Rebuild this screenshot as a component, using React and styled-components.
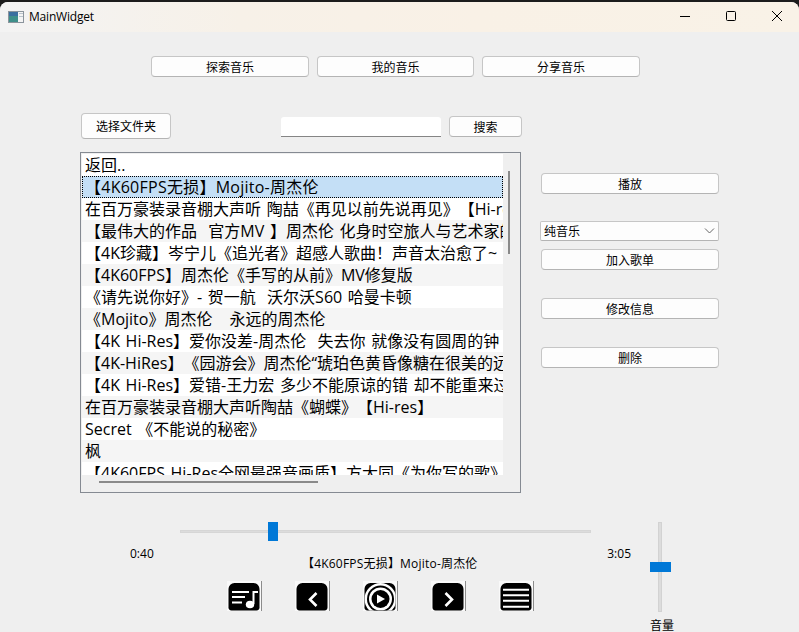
import React from "react";
import styled, { createGlobalStyle } from "styled-components";

const Global = createGlobalStyle`
  html, body { margin: 0; padding: 0; background: #efefef; }
  body { font-family: "Open Sans", "Noto Sans CJK SC", sans-serif; font-size: 12px; color: #000; text-spacing-trim: space-all; }
`;

const FONT = `"Open Sans", "Noto Sans CJK SC", sans-serif`;

const Window = styled.div`
  width: 799px;
  height: 632px;
  overflow: hidden;
  display: flex;
  flex-direction: column;
  background: #1c1c1c;
`;
const Frame = styled.div`
  flex: 1;
  margin-top: 2px;
  border-radius: 8px 8px 0 0;
  overflow: hidden;
  background: #efefef;
  display: flex;
  flex-direction: column;
`;
const TitleBar = styled.header`
  height: 30px;
  flex: none;
  display: flex;
  align-items: center;
  padding-left: 8px;
  margin-right: -1px;
  background: linear-gradient(90deg, #f3f3f3 0%, #f7f1e8 30%, #f9f1e6 60%, #f9f2e7 100%);
`;
const AppIcon = styled.svg`
  width: 16px;
  height: 12px;
  margin-right: 5px;
  margin-top: 0;
`;
const TitleText = styled.span`
  font-size: 12px;
  letter-spacing: -0.2px;
  margin-top: -1px;
  flex: 1;
`;
const WinBtn = styled.button`
  width: 46px;
  height: 30px;
  margin-top: -2px;
  padding: 0;
  border: 0;
  background: transparent;
  display: flex;
  align-items: center;
  justify-content: center;
`;
const Button = styled.button`
  box-sizing: border-box;
  width: ${(p) => p.$w || 178}px;
  height: ${(p) => p.$h || 21}px;
  padding: 0;
  flex: none;
  border: 1px solid #c6c6c6;
  border-bottom-color: #b4b4b4;
  border-radius: 4px;
  background: #fdfdfd;
  font: 12px ${FONT};
  color: #000;
  margin-top: ${(p) => p.$mt || 0}px;
`;
const NavRow = styled.nav`
  display: flex;
  gap: 8px;
  padding: 24px 0 0 151px;
`;
const Toolbar = styled.div`
  display: flex;
  align-items: flex-start;
  padding: 36px 0 0 81px;
`;
const SearchInput = styled.input`
  box-sizing: border-box;
  width: 160px;
  height: 20px;
  margin: 4px 8px 0 110px;
  padding: 0 4px;
  border: 0;
  border-bottom: 1px solid #858585;
  border-radius: 3px 3px 0 0;
  background: #fff;
  outline: none;
`;
const Middle = styled.div`
  display: flex;
  padding: 13px 0 0 80px;
  gap: 19px;
`;
const ListBox = styled.div`
  box-sizing: border-box;
  width: 441px;
  height: 341px;
  flex: none;
  border: 1px solid #858a92;
  background: #efefef;
  display: grid;
  grid-template-columns: 421px 18px;
  grid-template-rows: 321px 18px;
`;
const Rows = styled.ul`
  margin: 1px 0 0 1px;
  padding: 0;
  list-style: none;
  overflow: hidden;
  height: 321px;
  width: 421px;
`;
const Row = styled.li`
  box-sizing: border-box;
  height: 22px;
  padding: 0 0 0 ${(p) => (p.$selected ? 2 : 3)}px;
  font: 16px/23px ${FONT};
  word-spacing: 1.5px;
  letter-spacing: ${(p) => (p.$selected ? "0.25px" : "0")};
  white-space: pre;
  overflow: hidden;
  background: ${(p) => (p.$selected ? "#c4dff6" : p.$alt ? "#f5f5f5" : "#fff")};
  border: ${(p) => (p.$selected ? "1px dotted #000" : "0")};
  line-height: ${(p) => (p.$selected ? "21px" : "23px")};
`;
const VTrack = styled.div`
  position: relative;
  margin: 1px 0 0 0;
`;
const VThumb = styled.div`
  position: absolute;
  left: 6px;
  top: 17px;
  width: 2px;
  height: 83px;
  background: #8a8a8a;
`;
const HTrack = styled.div`
  position: relative;
  grid-column: 1 / 3;
`;
const HThumb = styled.div`
  position: absolute;
  left: 18px;
  top: 7px;
  width: 219px;
  height: 2px;
  background: #8a8a8a;
`;
const Side = styled.aside`
  display: flex;
  flex-direction: column;
  width: 179px;
  padding-top: 21px;
  align-items: flex-end;
`;
const SelectBox = styled.div`
  box-sizing: border-box;
  width: 179px;
  height: 20px;
  margin-top: 27px;
  border: 1px solid #c6c6c6;
  border-bottom-color: #b4b4b4;
  border-radius: 2px;
  background: #fdfdfd;
  display: flex;
  align-items: center;
  justify-content: space-between;
  padding: 0 2px 0 3px;
  font-size: 12px;
`;
const Player = styled.section`
  display: flex;
  align-items: flex-start;
  padding: 29px 0 0 0;
`;
const Transport = styled.div`
  width: 650px;
  flex: none;
  display: flex;
  flex-direction: column;
`;
const SeekWrap = styled.div`
  position: relative;
  margin-left: 180px;
  width: 411px;
  height: 20px;
`;
const SeekTrack = styled.div`
  position: absolute;
  left: 0;
  right: 0;
  top: 8px;
  height: 3px;
  background: #dcdcdc;
  box-shadow: inset 0 0 0 1px #d6d6d6;
`;
const SeekHandle = styled.div`
  position: absolute;
  left: 88px;
  top: 0;
  width: 10px;
  height: 19px;
  background: #0078d7;
`;
const Times = styled.div`
  display: flex;
  justify-content: space-between;
  align-items: flex-start;
  padding: 4px 19px 0 130px;
  height: 14px;
  line-height: 16px;
`;
const NowPlaying = styled.div`
  margin: -5px 0 0 302px;
  font-size: 12px;
  letter-spacing: 0.2px;
  line-height: 17px;
  height: 17px;
`;
const Controls = styled.div`
  display: flex;
  gap: 33px;
  padding: 9px 0 0 227px;
`;
const IconBtn = styled.button`
  width: 35px;
  height: 30px;
  padding: 0;
  border: 0;
  background: none;
  display: block;
`;
const Svg = styled.svg`
  display: block;
`;
const Volume = styled.div`
  display: flex;
  flex-direction: column;
  align-items: flex-start;
  width: 24px;
`;
const VolTrack = styled.div`
  position: relative;
  margin-left: 8px;
  width: 4px;
  height: 90px;
  background: #dcdcdc;
  border: 1px solid #d2d2d2;
  box-sizing: border-box;
`;
const VolHandle = styled.div`
  position: absolute;
  left: -9px;
  top: 39px;
  width: 21px;
  height: 10px;
  background: #0078d7;
`;
const VolLabel = styled.div`
  margin-top: 6px;
  font-size: 12px;
  line-height: 16px;
`;

const items = [
  "返回..",
  "【4K60FPS无损】Mojito-周杰伦",
  "在百万豪装录音棚大声听 陶喆《再见以前先说再见》【Hi-res】",
  "【最伟大的作品  官方MV 】周杰伦 化身时空旅人与艺术家的对话",
  "【4K珍藏】岑宁儿《追光者》超感人歌曲！声音太治愈了~",
  "【4K60FPS】周杰伦《手写的从前》MV修复版",
  "《请先说你好》- 贺一航  沃尔沃S60 哈曼卡顿",
  "《Mojito》周杰伦   永远的周杰伦",
  "【4K Hi-Res】爱你没差-周杰伦  失去你 就像没有圆周的钟",
  "【4K-HiRes】《园游会》周杰伦“琥珀色黄昏像糖在很美的远方",
  "【4K Hi-Res】爱错-王力宏 多少不能原谅的错 却不能重来过",
  "在百万豪装录音棚大声听陶喆《蝴蝶》【Hi-res】",
  "Secret 《不能说的秘密》",
  "枫",
  "【4K60FPS Hi-Res全网最强音画质】方大同《为你写的歌》",
];

const IconFrame = ({ children }) => (
  <Svg width="35" height="30" viewBox="0 0 35 30">
    <rect x="0" y="0" width="35" height="30" fill="#f9f9f9" />
    <rect x="34" y="0" width="1" height="30" fill="#8c8c8c" />
    <path d="M1.5 26V8a6 6 0 0 1 6-6h19a6 6 0 0 1 6 6v18a3 3 0 0 1-3 3.5H4.5a3 3 0 0 1-3-3.5z" fill="#000" />
    {children}
  </Svg>
);

const ListIcon = () => (
  <IconFrame>
    <g stroke="#fff" strokeWidth="2" fill="none">
      <path d="M5 11h17M5 16h13M5 21.5h10" />
      <path d="M25.5 11H31M26.5 11v12" />
    </g>
    <ellipse cx="23" cy="23.5" rx="4.2" ry="3.8" fill="#fff" />
  </IconFrame>
);
const PrevIcon = () => (
  <IconFrame>
    <path d="M21.5 12l-6.5 6.5 6.5 6.5" stroke="#fff" strokeWidth="2.6" fill="none" />
  </IconFrame>
);
const NextIcon = () => (
  <IconFrame>
    <path d="M14.5 12l6.5 6.5-6.5 6.5" stroke="#fff" strokeWidth="2.6" fill="none" />
  </IconFrame>
);
const PlayIcon = () => (
  <Svg width="35" height="30" viewBox="0 0 35 30">
    <defs>
      <clipPath id="playClip">
        <path d="M1.5 26V8a6 6 0 0 1 6-6h19a6 6 0 0 1 6 6v18a3 3 0 0 1-3 3.5H4.5a3 3 0 0 1-3-3.5z" />
      </clipPath>
    </defs>
    <rect x="0" y="0" width="35" height="30" fill="#f9f9f9" />
    <rect x="34" y="0" width="1" height="30" fill="#8c8c8c" />
    <g clipPath="url(#playClip)">
      <rect x="0" y="0" width="35" height="30" fill="#000" />
      <circle cx="17.5" cy="18" r="16" fill="#fff" />
      <circle cx="17.5" cy="18" r="13.5" fill="#000" />
      <circle cx="17.5" cy="18" r="11.5" fill="#fff" />
      <circle cx="17.5" cy="18" r="9" fill="#000" />
    </g>
    <path d="M14 13.5l8 4.5-8 4.5z" fill="#fff" />
  </Svg>
);
const MenuIcon = () => (
  <IconFrame>
    <path d="M4 8.7h26M4 14.2h26M4 19.8h26M4 25.7h26" stroke="#fff" strokeWidth="2" />
  </IconFrame>
);

export default function App() {
  return (
    <Window>
      <Global />
      <Frame>
        <TitleBar>
          <AppIcon viewBox="0 0 16 12">
            <rect x="0.5" y="0.5" width="15" height="11" fill="#f4f4f4" stroke="#8b949c" />
            <rect x="1" y="1" width="9" height="10" fill="#3f8f8a" />
            <rect x="1" y="1" width="9" height="4" fill="#3b6f9f" />
            <rect x="11" y="2" width="4" height="1" fill="#b9c3cc" />
            <rect x="11" y="5" width="4" height="1" fill="#b9c3cc" />
          </AppIcon>
          <TitleText>MainWidget</TitleText>
          <WinBtn aria-label="最小化">
            <svg width="10" height="10"><path d="M0 5.5h10" stroke="#000" /></svg>
          </WinBtn>
          <WinBtn aria-label="最大化">
            <svg width="10" height="10"><rect x="0.5" y="0.5" width="9" height="9" rx="1" fill="none" stroke="#000" /></svg>
          </WinBtn>
          <WinBtn aria-label="关闭">
            <svg width="10" height="10"><path d="M0 0l10 10M10 0L0 10" stroke="#000" /></svg>
          </WinBtn>
        </TitleBar>
        <NavRow>
          <Button $w={158}>探索音乐</Button>
          <Button $w={157}>我的音乐</Button>
          <Button $w={158}>分享音乐</Button>
        </NavRow>
        <Toolbar>
          <Button $w={90} $h={26}>选择文件夹</Button>
          <SearchInput />
          <Button $w={73} $mt={3}>搜索</Button>
        </Toolbar>
        <Middle>
          <ListBox>
            <Rows>
              {items.map((t, i) => (
                <Row key={i} $selected={i === 1} $alt={i > 1 && i % 2 === 1}>{t}</Row>
              ))}
            </Rows>
            <VTrack><VThumb /></VTrack>
            <HTrack><HThumb /></HTrack>
          </ListBox>
          <Side>
            <Button>播放</Button>
            <SelectBox>
              <span>纯音乐</span>
              <svg width="12" height="8" viewBox="0 0 12 8"><path d="M1 1.5l4.5 4.5 4.5-4.5" fill="none" stroke="#666" /></svg>
            </SelectBox>
            <Button $mt={8}>加入歌单</Button>
            <Button $mt={28}>修改信息</Button>
            <Button $mt={28}>删除</Button>
          </Side>
        </Middle>
        <Player>
          <Transport>
            <SeekWrap>
              <SeekTrack />
              <SeekHandle />
            </SeekWrap>
            <Times><span>0:40</span><span>3:05</span></Times>
            <NowPlaying>【4K60FPS无损】Mojito-周杰伦</NowPlaying>
            <Controls>
              <IconBtn><ListIcon /></IconBtn>
              <IconBtn><PrevIcon /></IconBtn>
              <IconBtn><PlayIcon /></IconBtn>
              <IconBtn><NextIcon /></IconBtn>
              <IconBtn><MenuIcon /></IconBtn>
            </Controls>
          </Transport>
          <Volume>
            <VolTrack><VolHandle /></VolTrack>
            <VolLabel>音量</VolLabel>
          </Volume>
        </Player>
      </Frame>
    </Window>
  );
}
